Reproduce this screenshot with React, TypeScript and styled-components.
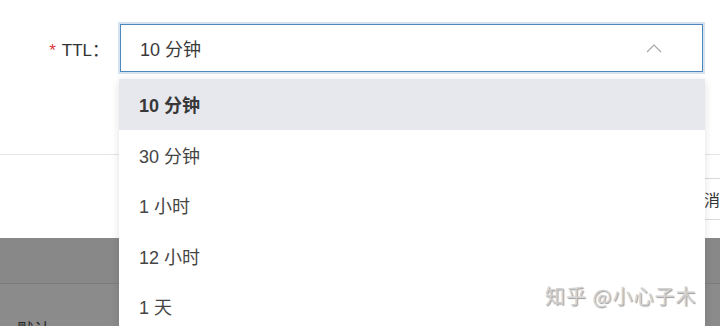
import React, { useState } from "react";
import styled, { createGlobalStyle } from "styled-components";

const GlobalStyle = createGlobalStyle`
  html, body {
    margin: 0;
    padding: 0;
    width: 720px;
    height: 326px;
    overflow: hidden;
    background: #fff;
  }
  body {
    font-family: "Liberation Sans", "Noto Sans CJK SC", sans-serif;
    color: #333;
  }
`;

const Page = styled.div`
  position: relative;
  width: 720px;
  height: 326px;
  overflow: hidden;
  display: flex;
  flex-direction: column;
`;

const Modal = styled.section`
  background: #fff;
  height: 238px;
  display: flex;
  flex-direction: column;
`;

const FormBody = styled.div`
  height: 155px;
  border-bottom: 1px solid #e6e6e6;
  padding-top: 22px;
  box-sizing: border-box;
`;

const FormRow = styled.div`
  display: flex;
  align-items: center;
`;

const Label = styled.label`
  width: 119px;
  box-sizing: border-box;
  padding-right: 10px;
  text-align: right;
  font-size: 17px;
  color: #333;
  white-space: nowrap;
`;

const Required = styled.span`
  color: #d8363a;
  margin-right: 6px;
`;

const SelectWrap = styled.div`
  position: relative;
  width: 585px;
`;

const SelectBox = styled.div`
  height: 48px;
  margin: 2px 1px;
  box-sizing: border-box;
  border: 1px solid #4f86bb;
  box-shadow: 0 0 0 2px #d5e3f1;
  background: #fff;
  display: flex;
  align-items: center;
  justify-content: space-between;
  padding: 0 40px 0 19px;
  font-size: 18px;
  color: #3a3a3a;
  cursor: pointer;
`;

const Menu = styled.ul`
  position: absolute;
  top: 57px;
  left: 0;
  width: 586px;
  margin: 0;
  padding: 0;
  list-style: none;
  background: #fff;
  box-shadow: 0 2px 8px rgba(0, 0, 0, 0.12);
  z-index: 5;
`;

const Option = styled.li<{ $active: boolean }>`
  height: 50.5px;
  display: flex;
  align-items: center;
  padding-left: 20px;
  font-size: 18px;
  color: ${(p) => (p.$active ? "#383838" : "#454545")};
  font-weight: ${(p) => (p.$active ? 600 : 400)};
  background: ${(p) => (p.$active ? "#e6e8ee" : "#fff")};
  cursor: pointer;
`;

const Footer = styled.div`
  flex: 1;
  display: flex;
  justify-content: flex-end;
  align-items: flex-start;
  padding-top: 23px;
`;

const Button = styled.button`
  height: 42px;
  padding: 0 20px;
  margin-right: -21px;
  border: 1px solid #d9d9d9;
  background: #fff;
  font-family: inherit;
  font-size: 16px;
  color: #333;
`;

const Mask = styled.div`
  flex: 1;
  background: #888;
  display: flex;
  flex-direction: column;
`;

const MaskRow = styled.div<{ $h: number; $pad: number }>`
  height: ${(p) => p.$h}px;
  box-sizing: border-box;
  padding: ${(p) => p.$pad}px 0 0 17px;
  border-bottom: 1px solid #7c7c7c;
  font-size: 17px;
  color: #2a2a2a;
  &:last-child {
    border-bottom: none;
    background: #8b8b8b;
  }
`;

const Watermark = styled.div`
  position: absolute;
  left: 545px;
  top: 281px;
  font-family: "Noto Sans CJK SC", sans-serif;
  font-size: 20px;
  letter-spacing: 1px;
  color: #d2d2d2;
  text-shadow: 1px 1px 1px #9a9a9a;
  z-index: 10;
  pointer-events: none;
`;

const Chevron = () => (
  <svg width="16" height="10" viewBox="0 0 16 10">
    <path d="M1 9 L8 2 L15 9" fill="none" stroke="#a8a8a8" strokeWidth="1.2" />
  </svg>
);

const options = ["10 分钟", "30 分钟", "1 小时", "12 小时", "1 天"];

export default function App() {
  const [value, setValue] = useState(options[0]);
  return (
    <Page>
      <GlobalStyle />
      <Modal>
        <FormBody>
          <FormRow>
            <Label>
              <Required>*</Required>TTL：
            </Label>
            <SelectWrap>
              <SelectBox>
                <span>{value}</span>
                <Chevron />
              </SelectBox>
              <Menu>
                {options.map((o) => (
                  <Option key={o} $active={o === value} onClick={() => setValue(o)}>
                    {o}
                  </Option>
                ))}
              </Menu>
            </SelectWrap>
          </FormRow>
        </FormBody>
        <Footer>
          <Button>取消</Button>
        </Footer>
      </Modal>
      <Mask>
        <MaskRow $h={46} $pad={0} />
        <MaskRow $h={42} $pad={32}>默认</MaskRow>
      </Mask>
      <Watermark>知乎 @小心子木</Watermark>
    </Page>
  );
}
